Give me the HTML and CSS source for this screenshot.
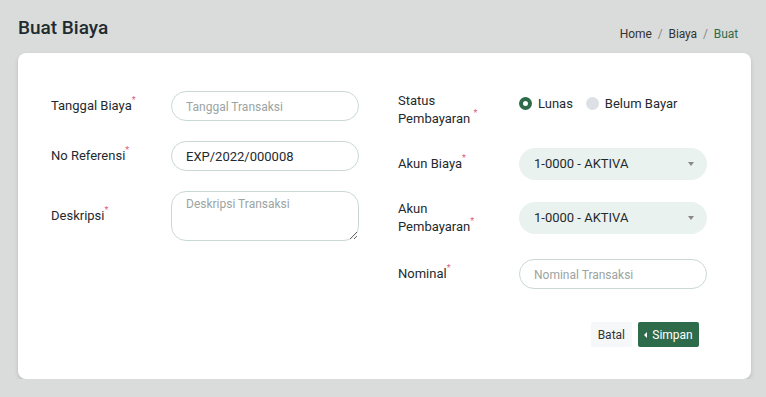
FILE: index.html
```html
<!DOCTYPE html>
<html lang="id">
<head>
  <meta charset="UTF-8">
  <meta name="viewport" content="width=device-width, initial-scale=1.0">
  <title>Buat Biaya</title>
  <link rel="stylesheet" href="styles.css">
</head>
<body>
  <div class="page">
    <div class="page-header">
      <h1>Buat Biaya</h1>
      <nav class="breadcrumb">
        <span>Home</span><span class="sep">/</span><span>Biaya</span><span class="sep">/</span><span class="active">Buat</span>
      </nav>
    </div>

    <div class="card">
      <div class="form-grid">
        <div class="form-col">
          <div class="form-row">
            <label class="form-label">Tanggal Biaya<sup>*</sup></label>
            <input class="form-input" type="text" placeholder="Tanggal Transaksi">
          </div>
          <div class="form-row">
            <label class="form-label">No Referensi<sup>*</sup></label>
            <input class="form-input" type="text" value="EXP/2022/000008">
          </div>
          <div class="form-row">
            <label class="form-label">Deskripsi<sup>*</sup></label>
            <textarea class="form-input form-textarea" placeholder="Deskripsi Transaksi"></textarea>
          </div>
        </div>

        <div class="form-col right">
          <div class="form-row top">
            <label class="form-label">Status<br>Pembayaran <sup>*</sup></label>
            <div class="radio-group">
              <label class="radio"><span class="dot checked"></span>Lunas</label>
              <label class="radio"><span class="dot"></span>Belum Bayar</label>
            </div>
          </div>
          <div class="form-row">
            <label class="form-label">Akun Biaya<sup>*</sup></label>
            <div class="form-select">1-0000 - AKTIVA<span class="caret"></span></div>
          </div>
          <div class="form-row tall">
            <label class="form-label">Akun<br>Pembayaran<sup>*</sup></label>
            <div class="form-select">1-0000 - AKTIVA<span class="caret"></span></div>
          </div>
          <div class="form-row nominal">
            <label class="form-label">Nominal<sup>*</sup></label>
            <input class="form-input" type="text" placeholder="Nominal Transaksi">
          </div>
          <div class="actions">
            <button class="btn btn-light">Batal</button>
            <button class="btn btn-primary"><span class="tri"></span>Simpan</button>
          </div>
        </div>
      </div>
    </div>
  </div>
</body>
</html>
```

FILE: styles.css
```css
html, body {
  margin: 0;
  padding: 0;
  background: #dadcdb;
  color: #1f2a2e;
  font-family: Roboto, "Liberation Sans", sans-serif;
}
.page {
  padding: 0 15px 0 18px;
}
.page-header {
  display: flex;
  justify-content: space-between;
  align-items: flex-end;
  height: 53px;
  box-sizing: border-box;
  padding-bottom: 12px;
}
.page-header h1 {
  margin: 0 0 2px 0;
  font-size: 19px;
  font-weight: 500;
  color: #1e2b30;
}
.breadcrumb {
  font-size: 12px;
  color: #333;
  margin-right: 13px;
  letter-spacing: -0.1px;
}
.breadcrumb .sep {
  color: #888;
  margin: 0 6px;
}
.breadcrumb .active {
  color: #2e6b4a;
}
.card {
  background: #fff;
  border-radius: 8px;
  box-shadow: 0 2px 4px rgba(0, 0, 0, 0.15);
  padding: 38px 44px 32px 33px;
  height: 326px;
  box-sizing: border-box;
}
.form-grid {
  display: grid;
  grid-template-columns: 308px 309px;
  column-gap: 39px;
}
.form-col {
  display: flex;
  flex-direction: column;
  gap: 20px;
}
.form-col.right {
  padding-top: 1px;
  gap: 20px;
}
.form-row {
  display: flex;
  align-items: center;
}
.form-row.top {
  align-items: flex-start;
  height: 36px;
}
.form-row.tall {
  height: 36px;
}
.form-row.nominal {
  margin-top: 3px;
}
.form-label {
  width: 120px;
  flex-shrink: 0;
  font-size: 13px;
  line-height: 18px;
  color: #1f2a2e;
}
.right .form-label {
  width: 121px;
}
.form-label sup {
  color: #e0607a;
  font-size: 9px;
  vertical-align: top;
  line-height: 10px;
  position: relative;
  top: -2px;
}
.form-input {
  width: 188px;
  height: 30px;
  box-sizing: border-box;
  border: 1px solid #cad8d3;
  border-radius: 15px;
  padding: 0 14px;
  font-family: inherit;
  font-size: 13px;
  color: #1f2a2e;
  background: #fff;
  outline: none;
}
.form-input::placeholder {
  color: #9ba4a2;
  font-size: 12px;
}
.form-textarea {
  height: 50px;
  padding: 5px 14px;
  resize: vertical;
  display: block;
}
.radio-group {
  display: flex;
  align-items: center;
  gap: 13px;
  height: 22px;
}
.radio {
  display: flex;
  align-items: center;
  gap: 6px;
  font-size: 13px;
  color: #1f2a2e;
}
.dot {
  width: 13px;
  height: 13px;
  border-radius: 50%;
  background: #dde0e4;
  box-sizing: border-box;
}
.dot.checked {
  background: #fff;
  border: 4px solid #2e6b4a;
}
.form-select {
  position: relative;
  width: 188px;
  height: 32px;
  box-sizing: border-box;
  border-radius: 16px;
  background: #eaf2ef;
  padding: 0 15px;
  font-size: 13px;
  line-height: 32px;
  color: #1f2a2e;
}
.caret {
  position: absolute;
  right: 13px;
  top: 14px;
  border-left: 3px solid transparent;
  border-right: 3px solid transparent;
  border-top: 4px solid #888;
}
.actions {
  display: flex;
  justify-content: flex-end;
  gap: 6px;
  margin-top: 13px;
  margin-right: 8px;
}
.btn {
  height: 25px;
  border: none;
  border-radius: 2px;
  font-family: inherit;
  font-size: 12px;
  padding: 0 7px;
  display: flex;
  align-items: center;
  cursor: pointer;
}
.btn-light {
  background: #f5f7f8;
  color: #333;
}
.btn-primary {
  background: #2e6b4a;
  color: #fff;
  width: 61px;
  justify-content: center;
}
.tri {
  border-top: 3px solid transparent;
  border-bottom: 3px solid transparent;
  border-right: 3px solid #fff;
  margin-right: 5px;
}
```
